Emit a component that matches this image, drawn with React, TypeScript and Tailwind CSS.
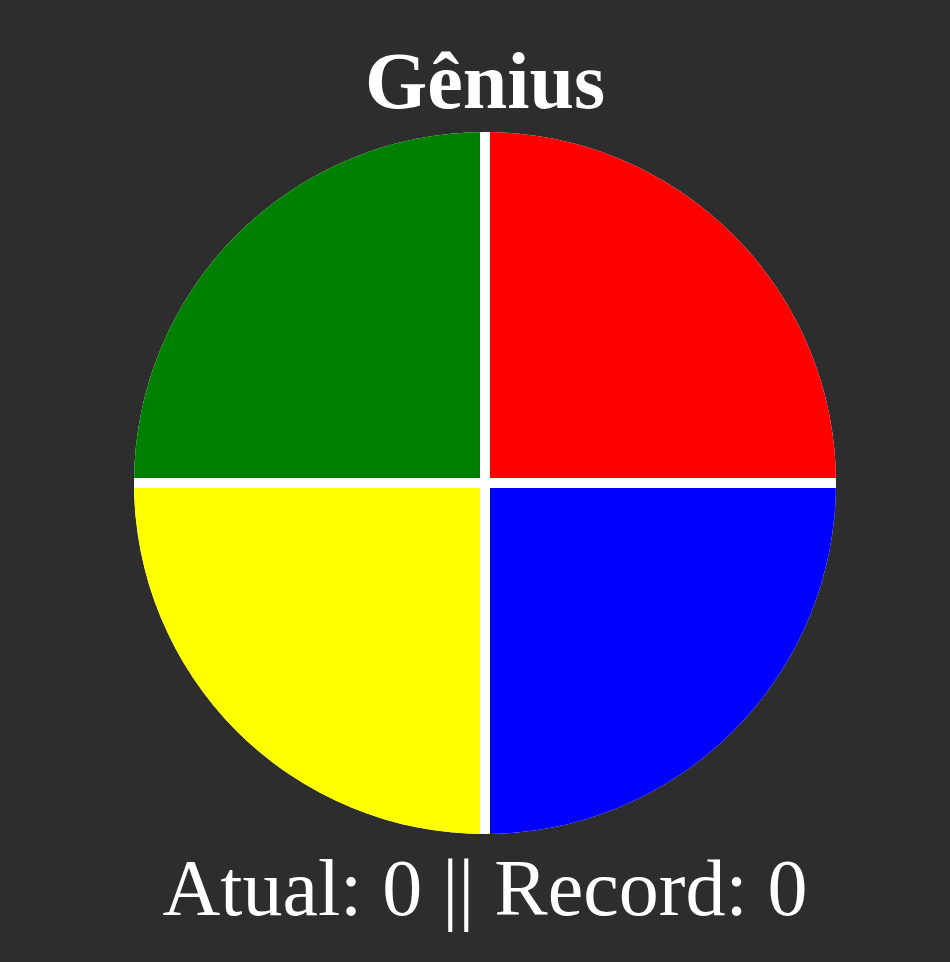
const quadrants = [
  { key: "green", className: "bg-[#008000]" },
  { key: "red", className: "bg-[#ff0000]" },
  { key: "yellow", className: "bg-[#ffff00]" },
  { key: "blue", className: "bg-[#0000ff]" },
];

export default function App() {
  return (
    <div
      className="flex min-h-[962px] w-full flex-col items-center bg-[#2d2d2d] pl-5 pt-[37px] text-white"
      style={{ fontFamily: '"Liberation Serif", "Times New Roman", serif' }}
    >
      <h1 className="text-[80px] font-bold leading-[89px]">Gênius</h1>

      <div className="mt-[6px] grid h-[702px] w-[702px] grid-cols-2 gap-[10px] overflow-hidden rounded-full bg-white">
        {quadrants.map((q) => (
          <div key={q.key} className={q.className} />
        ))}
      </div>

      <p className="mt-[10px] text-[80px] leading-[89px]">Atual: 0 || Record: 0</p>
    </div>
  );
}
